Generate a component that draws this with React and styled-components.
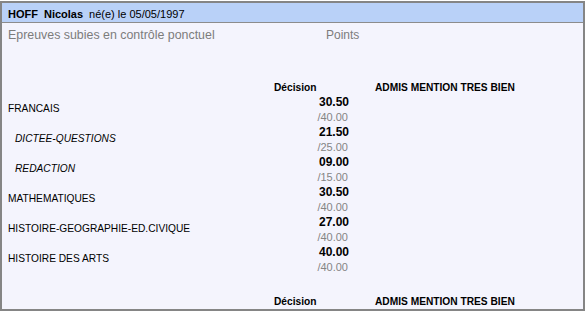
import React from "react";
import styled, { createGlobalStyle } from "styled-components";

const Global = createGlobalStyle`
  html, body { margin: 0; padding: 0; background: #ffffff; }
  body { font-family: "Liberation Sans", Arial, sans-serif; }
  #root { padding-top: 1px; }
`;

const Frame = styled.div`
  width: 585px;
  height: 310px;
  box-sizing: border-box;
  border: 2px solid #858585;
  background: #f4f4fd;
  display: flex;
  flex-direction: column;
`;

const Header = styled.div`
  height: 17px;
  padding: 2px 0 0 6px;
  background: #b9d1f8;
  border-bottom: 1px solid #8c8c8c;
  display: flex;
  align-items: center;
  font-size: 11px;
  color: #000;
`;

const Name = styled.span`
  font-weight: bold;
  margin-right: ${(p) => p.$gap || 0}px;
`;

const Intro = styled.div`
  display: grid;
  grid-template-columns: 318px 1fr;
  padding: 4px 0 0 6px;
  height: 16px;
  line-height: 16px;
  font-size: 12.4px;
  color: #7c7c7c;
`;

const Points = styled.span`
  font-size: 12px;
`;

const Table = styled.div`
  display: grid;
  grid-template-columns: 266px 80px 1fr;
  padding-left: 6px;
  margin-top: ${(p) => p.$top}px;
  font-size: 10.2px;
  color: #000;
`;

const Label = styled.div`
  font-weight: bold;
  line-height: 15px;
  height: 15px;
  padding-left: ${(p) => p.$pad || 0}px;
`;

const Subject = styled.div`
  height: 30px;
  padding-top: 7px;
  box-sizing: border-box;
  line-height: 14px;
  padding-left: ${(p) => (p.$sub ? 7 : 0)}px;
  font-style: ${(p) => (p.$sub ? "italic" : "normal")};
`;

const ScoreCell = styled.div`
  height: 30px;
  display: flex;
  flex-direction: column;
  align-items: flex-end;
  padding-right: 5px;
`;

const Score = styled.div`
  font-size: 12px;
  font-weight: bold;
  line-height: 15px;
`;

const OutOf = styled.div`
  font-size: 11px;
  color: #858585;
  line-height: 15px;
  margin-right: 1px;
`;

const Empty = styled.div``;

const rows = [
  { name: "FRANCAIS", score: "30.50", max: "/40.00" },
  { name: "DICTEE-QUESTIONS", score: "21.50", max: "/25.00", sub: true },
  { name: "REDACTION", score: "09.00", max: "/15.00", sub: true },
  { name: "MATHEMATIQUES", score: "30.50", max: "/40.00" },
  { name: "HISTOIRE-GEOGRAPHIE-ED.CIVIQUE", score: "27.00", max: "/40.00" },
  { name: "HISTOIRE DES ARTS", score: "40.00", max: "/40.00" },
];

function DecisionRow() {
  return (
    <>
      <Empty />
      <Label>Décision</Label>
      <Label $pad={21}>ADMIS MENTION TRES BIEN</Label>
    </>
  );
}

export default function App() {
  return (
    <>
      <Global />
      <Frame>
        <Header>
          <Name $gap={6}>HOFF</Name>
          <Name $gap={6}>Nicolas</Name>
          <span>né(e) le 05/05/1997</span>
        </Header>
        <Intro>
          <span>Epreuves subies en contrôle ponctuel</span>
          <Points>Points</Points>
        </Intro>
        <Table $top={37}>
          <DecisionRow />
          {rows.map((r) => (
            <React.Fragment key={r.name}>
              <Subject $sub={r.sub}>{r.name}</Subject>
              <ScoreCell>
                <Score>{r.score}</Score>
                <OutOf>{r.max}</OutOf>
              </ScoreCell>
              <Empty />
            </React.Fragment>
          ))}
        </Table>
        <Table $top={19}>
          <DecisionRow />
        </Table>
      </Frame>
    </>
  );
}
